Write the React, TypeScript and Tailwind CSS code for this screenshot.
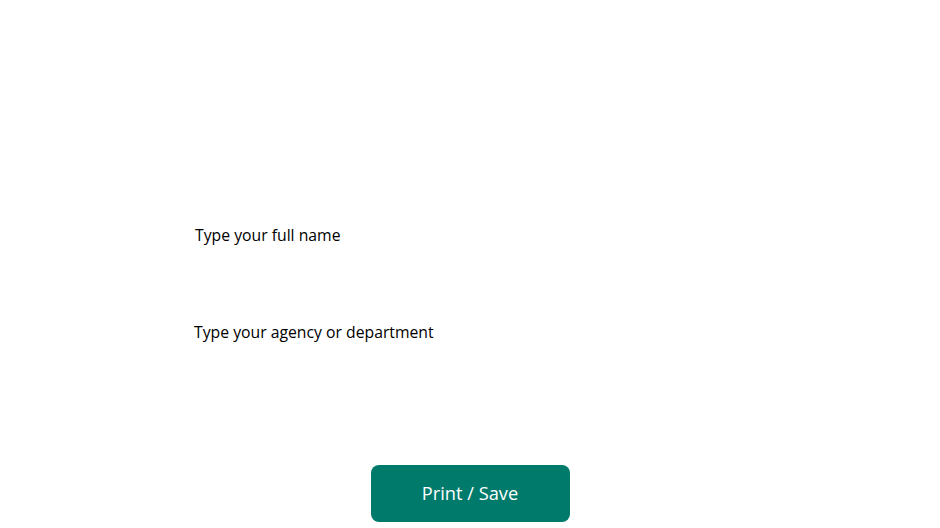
import React from "react";

export default function App() {
  return (
    <div
      className="w-[940px] h-[528px] bg-white overflow-hidden"
      style={{ fontFamily: '"Open Sans", "Liberation Sans", sans-serif' }}
    >
      <div className="mx-auto w-[550px] pt-[223px] flex flex-col">
        <div className="h-[97px]">
          <p className="text-[15.75px] leading-[24px] text-black">Type your full name</p>
        </div>
        <div className="-ml-px">
          <p className="text-[15.75px] leading-[24px] text-black">Type your agency or department</p>
        </div>
      </div>
      <div className="flex justify-center pt-[121px]">
        <button
          type="button"
          className="w-[199px] h-[57px] pb-[2px] rounded-lg bg-[#007b6b] text-white text-[18.25px] leading-[24px]"
        >
          Print / Save
        </button>
      </div>
    </div>
  );
}
